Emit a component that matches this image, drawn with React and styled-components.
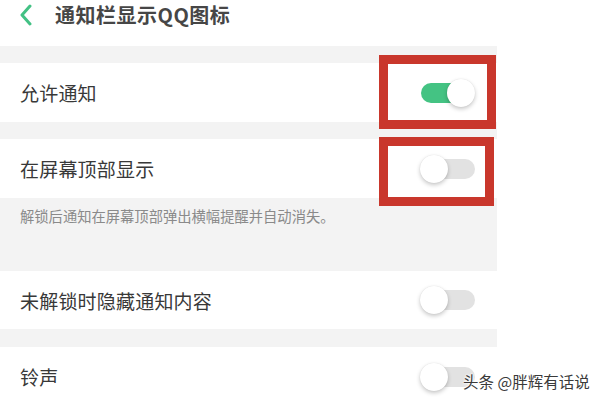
import React from "react";
import styled, { createGlobalStyle } from "styled-components";

const Global = createGlobalStyle`
  html, body { margin: 0; padding: 0; background: #fff; }
  body { width: 600px; height: 400px; overflow: hidden;
    font-family: "Noto Sans CJK SC", "Noto Sans", sans-serif; }
`;

const Page = styled.div`
  position: relative;
  width: 600px;
  height: 400px;
  overflow: hidden;
  background: #fff;
`;

const Panel = styled.div`
  width: 497px;
  display: flex;
  flex-direction: column;
  background: #f3f3f3;
`;

const Header = styled.div`
  height: 46px;
  background: #fff;
  display: flex;
  align-items: flex-start;
  padding-left: 19px;
  gap: 22px;
`;

const Back = styled.svg`
  width: 14px;
  height: 22px;
  margin-top: 4px;
`;

const Title = styled.div`
  font-size: 20px;
  font-weight: 700;
  color: #464646;
  line-height: 30px;
  letter-spacing: 0.5px;
`;

const Gap = styled.div`
  height: ${(p) => p.h}px;
`;

const Row = styled.div`
  height: ${(p) => p.h || 59}px;
  background: #fff;
  display: flex;
  align-items: center;
  justify-content: space-between;
  padding: 0 22px 0 20px;
`;

const Label = styled.div`
  font-size: 19px;
  color: #383838;
  letter-spacing: 0.2px;
`;

const Note = styled.div`
  height: 73px;
  box-sizing: border-box;
  padding: 8px 0 0 20px;
  font-size: 14.3px;
  color: #8a8a8a;
  line-height: 20px;
`;

const Track = styled.div`
  position: relative;
  width: 55px;
  height: 28px;
  display: flex;
  align-items: center;
  justify-content: ${(p) => (p.on ? "flex-end" : "flex-start")};
  &::before {
    content: "";
    position: absolute;
    top: 4px;
    height: 20px;
    border-radius: 10px;
    background: ${(p) => (p.on ? "#44c383" : "#e2e2e2")};
    ${(p) => (p.on ? "left: 1px; right: 6px;" : "left: 6px; right: 0;")}
  }
`;

const Knob = styled.div`
  position: relative;
  width: 28px;
  height: 28px;
  border-radius: 50%;
  background: #fff;
  box-shadow: 0 2px 4px rgba(0, 0, 0, 0.22), 0 0 1px rgba(0, 0, 0, 0.12);
`;

const Mark = styled.div`
  position: absolute;
  left: ${(p) => p.x}px;
  top: ${(p) => p.y}px;
  width: ${(p) => p.w}px;
  height: ${(p) => p.h}px;
  box-sizing: border-box;
  border: 9px solid #c9372c;
`;

const Watermark = styled.div`
  position: absolute;
  left: 463px;
  top: 370px;
  font-size: 15.5px;
  color: #3a3a3a;
  white-space: nowrap;
  text-shadow: 0 0 2px #fff, 0 0 2px #fff, 0 0 3px #fff;
`;

const Toggle = ({ on }) => (
  <Track on={on}>
    <Knob />
  </Track>
);

export default function App() {
  return (
    <>
      <Global />
      <Page>
        <Panel>
          <Header>
            <Back viewBox="0 0 14 22">
              <path d="M11 2 L3 11 L11 20" fill="none" stroke="#43c184" strokeWidth="3" strokeLinecap="round" strokeLinejoin="round" />
            </Back>
            <Title>通知栏显示QQ图标</Title>
          </Header>
          <Gap h={17} />
          <Row>
            <Label>允许通知</Label>
            <Toggle on />
          </Row>
          <Gap h={17} />
          <Row>
            <Label>在屏幕顶部显示</Label>
            <Toggle />
          </Row>
          <Note>解锁后通知在屏幕顶部弹出横幅提醒并自动消失。</Note>
          <Row h={58}>
            <Label>未解锁时隐藏通知内容</Label>
            <Toggle />
          </Row>
          <Gap h={18} />
          <Row>
            <Label>铃声</Label>
            <Toggle />
          </Row>
        </Panel>
        <Mark x={379} y={55} w={117} h={74} />
        <Mark x={379} y={137} w={115} h={69} />
        <Watermark>头条 @胖辉有话说</Watermark>
      </Page>
    </>
  );
}
